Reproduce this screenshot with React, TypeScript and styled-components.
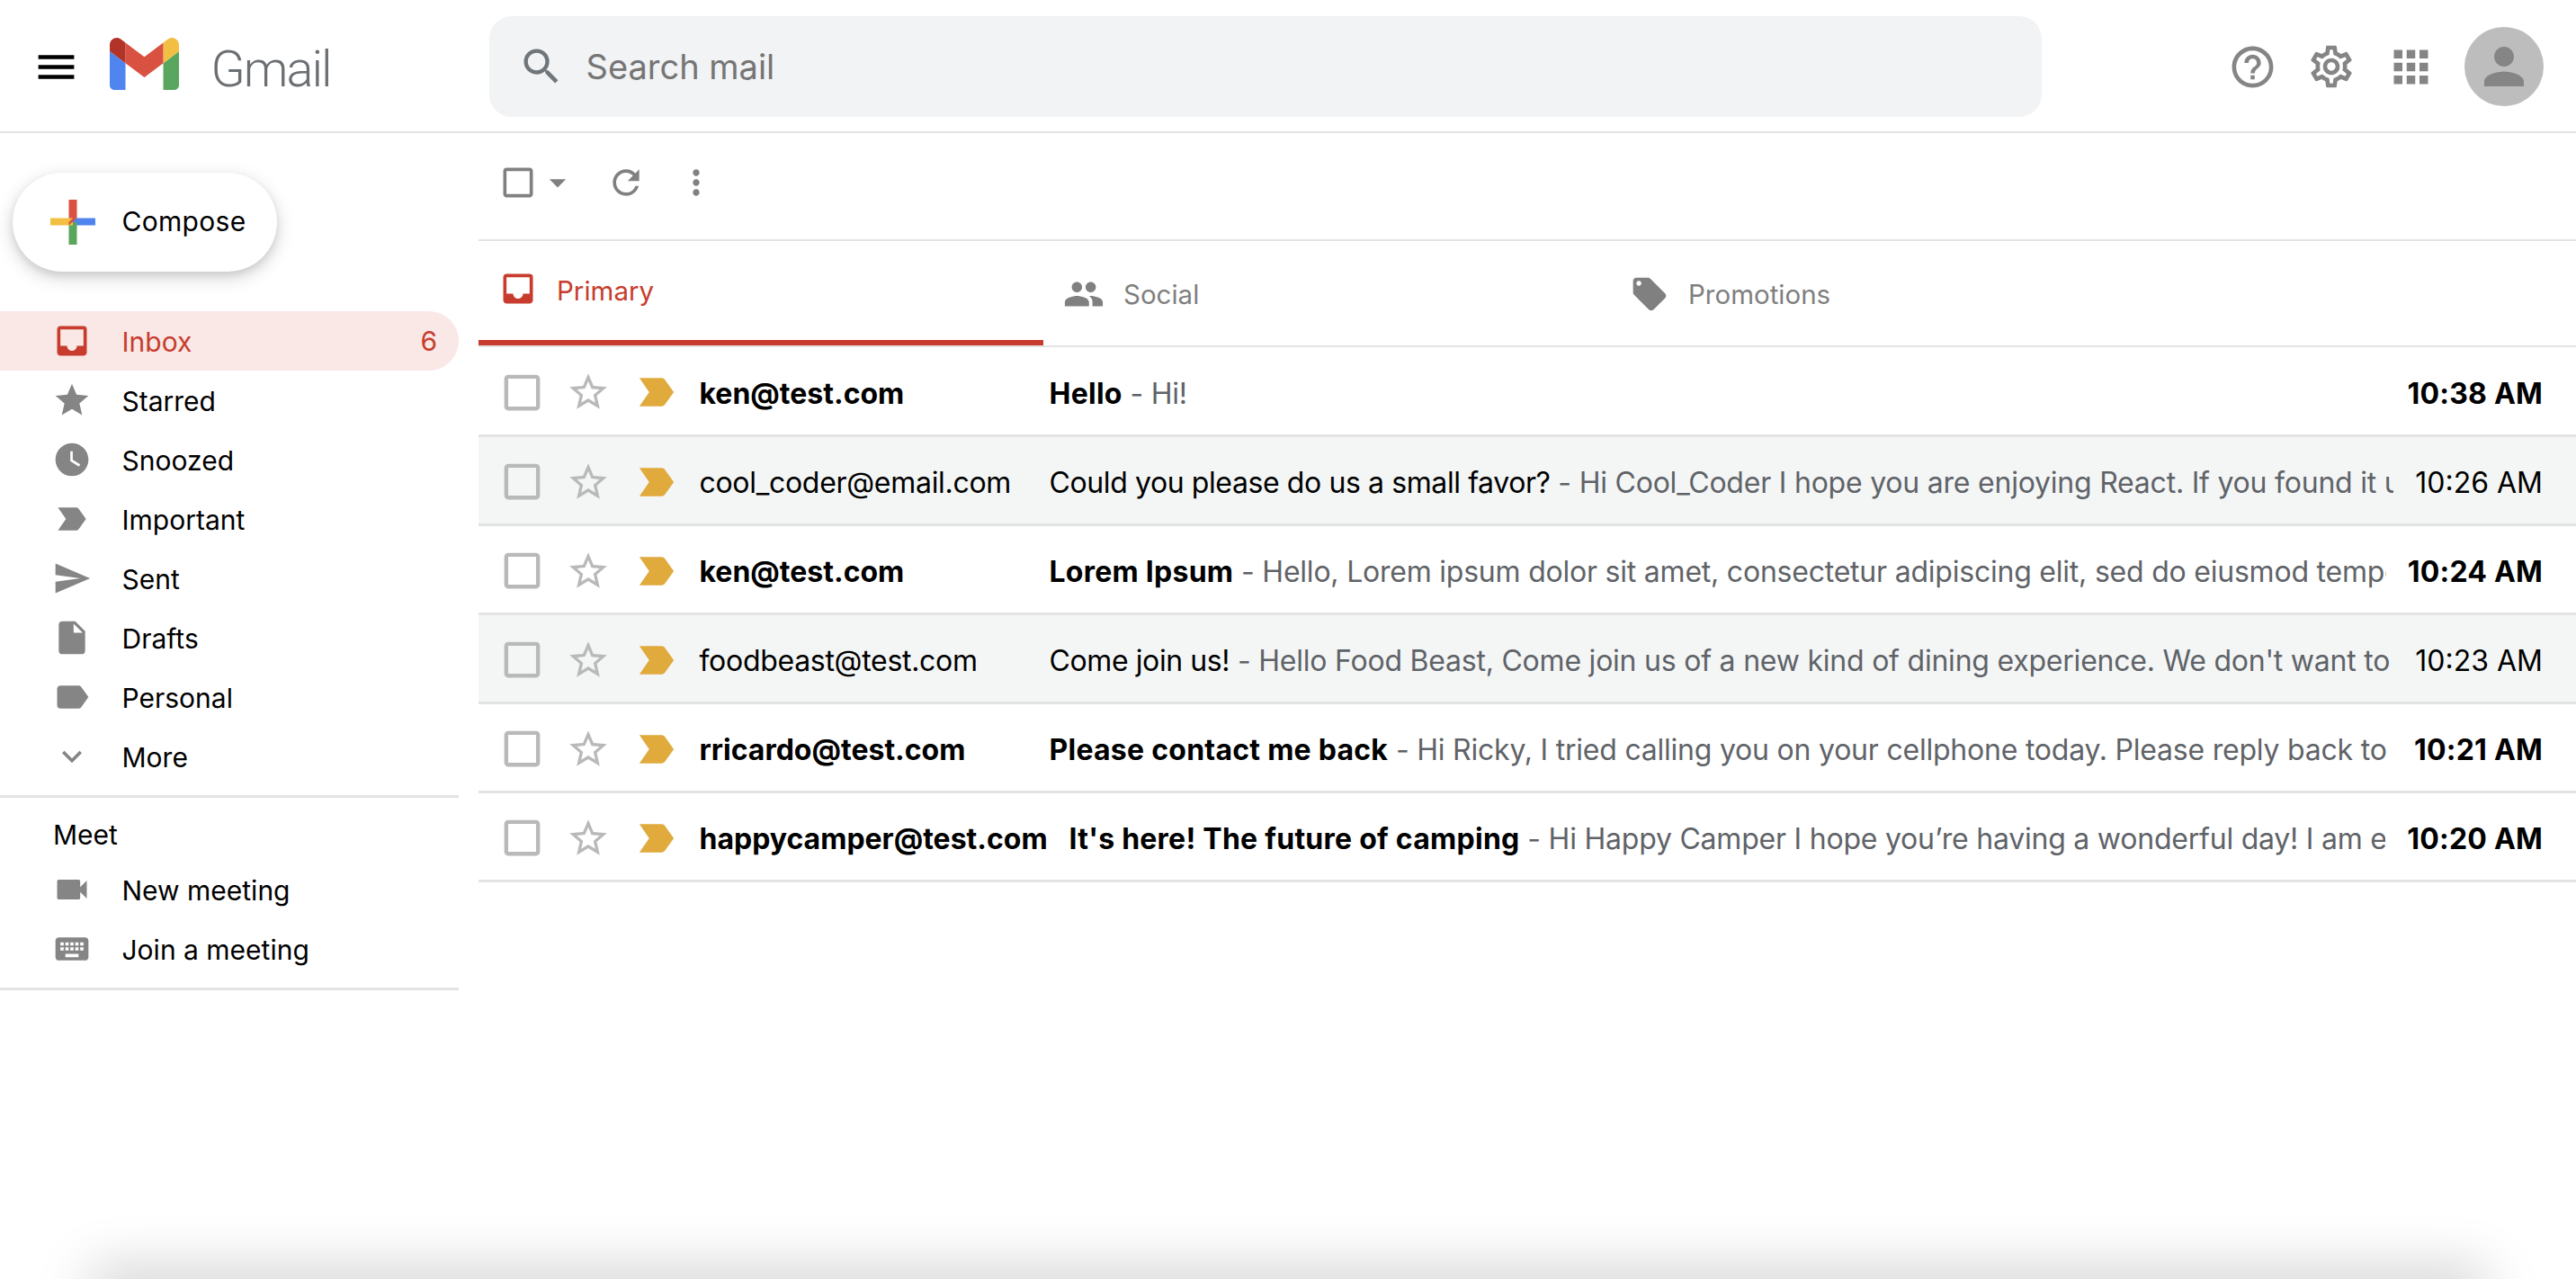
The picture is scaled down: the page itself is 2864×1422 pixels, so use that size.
import { createGlobalStyle, styled } from "styled-components";
import {
  MdApps,
  MdArrowDropDown,
  MdCheckBoxOutlineBlank,
  MdExpandMore,
  MdHelpOutline,
  MdInbox,
  MdInsertDriveFile,
  MdKeyboard,
  MdLabel,
  MdLabelImportant,
  MdLocalOffer,
  MdMenu,
  MdMoreVert,
  MdOutlineSettings,
  MdPeople,
  MdPerson,
  MdRefresh,
  MdSearch,
  MdSend,
  MdStar,
  MdStarBorder,
  MdVideocam,
  MdWatchLater,
} from "react-icons/md";

const navItems = [
  { label: "Inbox", icon: MdInbox, count: 6, active: true },
  { label: "Starred", icon: MdStar },
  { label: "Snoozed", icon: MdWatchLater },
  { label: "Important", icon: MdLabelImportant },
  { label: "Sent", icon: MdSend },
  { label: "Drafts", icon: MdInsertDriveFile },
  { label: "Personal", icon: MdLabel },
  { label: "More", icon: MdExpandMore },
];

const mails = [
  { from: "ken@test.com", subject: "Hello", snippet: "Hi!", time: "10:38 AM", unread: true },
  {
    from: "cool_coder@email.com",
    subject: "Could you please do us a small favor?",
    snippet: "Hi Cool_Coder I hope you are enjoying React. If you found it useful, please leave us a review on the course page.",
    time: "10:26 AM",
  },
  {
    from: "ken@test.com",
    subject: "Lorem Ipsum",
    snippet: "Hello, Lorem ipsum dolor sit amet, consectetur adipiscing elit, sed do eiusmod tempor incididunt ut labore et dolore magna aliqua.",
    time: "10:24 AM",
    unread: true,
  },
  {
    from: "foodbeast@test.com",
    subject: "Come join us!",
    snippet: "Hello Food Beast, Come join us of a new kind of dining experience. We don't want to spoil the surprise, so come and see.",
    time: "10:23 AM",
  },
  {
    from: "rricardo@test.com",
    subject: "Please contact me back",
    snippet: "Hi Ricky, I tried calling you on your cellphone today. Please reply back to this message as soon as you can.",
    time: "10:21 AM",
    unread: true,
  },
  {
    from: "happycamper@test.com",
    subject: "It's here! The future of camping",
    snippet: "Hi Happy Camper I hope you’re having a wonderful day! I am emailing you about our brand new camping gear.",
    time: "10:20 AM",
    unread: true,
  },
];

function GmailLogo() {
  return (
    <LogoSvg viewBox="52 42 88 66">
      <path fill="#5084ee" d="M58 108h14V74L52 59v43c0 3.32 2.69 6 6 6" />
      <path fill="#5aa65e" d="M120 108h14c3.32 0 6-2.69 6-6V59l-20 15" />
      <path fill="#f2bf42" d="M120 48v26l20-15v-8c0-7.42-8.47-11.65-14.4-7.2" />
      <path fill="#d95140" d="M72 74V48l24 18 24-18v26L96 92" />
      <path fill="#b23327" d="M52 51v8l20 15V48l-5.6-4.2c-5.94-4.45-14.4-.22-14.4 7.2" />
    </LogoSvg>
  );
}

function ComposePlus() {
  return (
    <PlusSvg viewBox="0 0 50 50">
      <rect x="20.5" y="0" width="9" height="25" fill="#d95140" />
      <rect x="25" y="20.5" width="25" height="8" fill="#5084ee" />
      <rect x="20.5" y="25" width="9" height="25" fill="#5aa65e" />
      <rect x="0" y="20.5" width="25" height="8" fill="#f2bf42" />
      <polygon points="20.5,28.5 29.5,20.5 25,20.5 20.5,25" fill="#d95140" />
    </PlusSvg>
  );
}

export default function App() {
  return (
    <Page>
      <GlobalStyle />

      <Header>
        <MenuBtn>
          <MdMenu />
        </MenuBtn>
        <GmailLogo />
        <Wordmark>Gmail</Wordmark>
        <SearchBox>
          <SearchIcon>
            <MdSearch />
          </SearchIcon>
          <SearchText>Search mail</SearchText>
        </SearchBox>
        <HeaderRight>
          <HeaderBtn $size={55}>
            <MdHelpOutline />
          </HeaderBtn>
          <HeaderBtn $size={56}>
            <MdOutlineSettings />
          </HeaderBtn>
          <HeaderBtn $size={57}>
            <MdApps />
          </HeaderBtn>
          <Avatar>
            <MdPerson />
          </Avatar>
        </HeaderRight>
      </Header>

      <Body>
        <Sidebar>
          <ComposeBtn>
            <ComposePlus />
            <ComposeLabel>Compose</ComposeLabel>
          </ComposeBtn>

          <NavList>
            {navItems.map((item) => (
              <NavRow key={item.label} $active={item.active}>
                <NavIcon>
                  <item.icon />
                </NavIcon>
                <NavLabel>{item.label}</NavLabel>
                {item.count && <NavCount>{item.count}</NavCount>}
              </NavRow>
            ))}
          </NavList>

          <MeetSection>
            <MeetTitle>Meet</MeetTitle>
            <NavRow>
              <NavIcon>
                <MdVideocam />
              </NavIcon>
              <NavLabel>New meeting</NavLabel>
            </NavRow>
            <NavRow>
              <NavIcon>
                <MdKeyboard />
              </NavIcon>
              <NavLabel>Join a meeting</NavLabel>
            </NavRow>
          </MeetSection>
        </Sidebar>

        <Main>
          <Toolbar>
            <ToolIcon>
              <MdCheckBoxOutlineBlank />
            </ToolIcon>
            <ToolIcon>
              <MdArrowDropDown />
            </ToolIcon>
            <ToolIcon $gap={32}>
              <MdRefresh />
            </ToolIcon>
            <ToolIcon $gap={34}>
              <MdMoreVert />
            </ToolIcon>
          </Toolbar>

          <Tabs>
            <Tab $active $width={628}>
              <TabIcon $size={44}>
                <MdInbox />
              </TabIcon>
              <TabLabel $active>Primary</TabLabel>
            </Tab>
            <Tab $width={630}>
              <TabIcon $size={46}>
                <MdPeople />
              </TabIcon>
              <TabLabel>Social</TabLabel>
            </Tab>
            <Tab $width={630}>
              <TabIcon $size={44}>
                <MdLocalOffer />
              </TabIcon>
              <TabLabel>Promotions</TabLabel>
            </Tab>
          </Tabs>

          <MailList>
            {mails.map((mail, i) => (
              <MailRow key={i} $alt={!mail.unread} $unread={mail.unread}>
                <RowCheck>
                  <MdCheckBoxOutlineBlank />
                </RowCheck>
                <RowStar>
                  <MdStarBorder />
                </RowStar>
                <RowImportant>
                  <MdLabelImportant />
                </RowImportant>
                <Sender $unread={mail.unread}>{mail.from}</Sender>
                <Message>
                  <Subject $unread={mail.unread}>{mail.subject}</Subject>
                  <Snippet> - {mail.snippet}</Snippet>
                </Message>
                <Time $unread={mail.unread}>{mail.time}</Time>
              </MailRow>
            ))}
          </MailList>
        </Main>
      </Body>

      <BottomShadow />
    </Page>
  );
}

const GlobalStyle = createGlobalStyle`
  html, body { margin: 0; background: #fff; overflow: hidden; }
  body { font-family: Inter, "Liberation Sans", sans-serif; color: #000; }
  * { box-sizing: border-box; }
`;

const Page = styled.div`
  position: relative;
  height: 1422px;
  overflow: hidden;
  background: #fff;
`;

const Header = styled.header`
  display: flex;
  align-items: center;
  height: 148px;
  padding: 2px 36px 0 35.5px;
  border-bottom: 2px solid #e3e3e3;
`;

const MenuBtn = styled.div`
  display: flex;
  font-size: 53px;
  color: #000;
  margin-right: 33px;
`;

const LogoSvg = styled.svg`
  width: 77px;
  height: 58px;
  flex-shrink: 0;
  margin-top: -6px;
`;

const Wordmark = styled.div`
  width: 309px;
  margin-left: 36px;
  margin-top: 5px;
  font-family: Roboto, sans-serif;
  font-size: 56px;
  font-weight: 300;
  letter-spacing: -2px;
  color: #6b6f73;
`;

const SearchBox = styled.div`
  display: flex;
  align-items: center;
  width: 1726px;
  height: 112px;
  padding-left: 32px;
  background: #f1f3f4;
  border-radius: 25px;
`;

const SearchIcon = styled.div`
  display: flex;
  font-size: 52px;
  color: #70757a;
  margin-right: 24px;
`;

const SearchText = styled.span`
  font-size: 38px;
  color: #757575;
`;

const HeaderRight = styled.div`
  display: flex;
  align-items: center;
  margin-left: auto;
`;

const HeaderBtn = styled.div<{ $size: number }>`
  display: flex;
  align-items: center;
  justify-content: center;
  width: 88px;
  font-size: ${(p) => p.$size}px;
  color: #858585;
`;

const Avatar = styled.div`
  display: flex;
  align-items: center;
  justify-content: center;
  width: 88px;
  height: 88px;
  margin-left: 16px;
  border-radius: 50%;
  background: #bdbdbd;
  font-size: 66px;
  color: #858585;
`;

const Body = styled.div`
  display: grid;
  grid-template-columns: 510px 1fr;
  column-gap: 22px;
`;

const Sidebar = styled.aside`
  padding-top: 44px;
`;

const ComposeBtn = styled.div`
  display: flex;
  align-items: center;
  width: 294px;
  height: 110px;
  margin-left: 14px;
  padding-left: 42px;
  border-radius: 55px;
  background: #fff;
  box-shadow: 0 4px 8px rgba(0, 0, 0, 0.08), 0 6px 20px rgba(0, 0, 0, 0.18);
`;

const ComposeLabel = styled.span`
  font-size: 30px;
  letter-spacing: 0.3px;
  margin-top: -2px;
`;

const PlusSvg = styled.svg`
  width: 50px;
  height: 50px;
  margin-right: 29.5px;
`;

const NavList = styled.nav`
  margin-top: 44px;
  padding-bottom: 10px;
  border-bottom: 3px solid #e3e3e3;
`;

const NavRow = styled.div<{ $active?: boolean }>`
  display: flex;
  align-items: center;
  height: 66px;
  padding: 0 24px 0 58px;
  border-radius: ${(p) => (p.$active ? "0 33px 33px 0" : "0")};
  background: ${(p) => (p.$active ? "#f9e8e6" : "transparent")};
  color: ${(p) => (p.$active ? "#c83c2e" : "#000")};

  svg {
    color: ${(p) => (p.$active ? "#c83c2e" : "#858585")};
  }
`;

const NavIcon = styled.div`
  display: flex;
  font-size: 44px;
  margin-right: 33.5px;
`;

const NavLabel = styled.span`
  font-size: 30px;
  font-weight: 400;
  padding-top: 2px;
`;

const NavCount = styled.span`
  margin-left: auto;
  font-size: 30px;
`;

const MeetSection = styled.section`
  padding-bottom: 10px;
  border-bottom: 3px solid #e3e3e3;
`;

const MeetTitle = styled.div`
  height: 69px;
  padding: 23px 0 0 59px;
  font-size: 30px;
  line-height: 36px;
`;

const Main = styled.main`
  min-width: 0;
`;

const Toolbar = styled.div`
  display: flex;
  align-items: center;
  height: 120px;
  padding: 0 0 8px 22px;
  border-bottom: 2px solid #e3e3e3;
`;

const ToolIcon = styled.div<{ $gap?: number }>`
  display: flex;
  font-size: 44px;
  color: #808080;
  margin-left: ${(p) => p.$gap ?? 0}px;
`;

const Tabs = styled.div`
  display: flex;
  height: 118px;
  border-bottom: 2px solid #e3e3e3;
`;

const Tab = styled.div<{ $active?: boolean; $width: number }>`
  display: flex;
  align-items: center;
  width: ${(p) => p.$width}px;
  height: 116px;
  padding: ${(p) => (p.$active ? "0 0 4px 22px" : "2px 0 0 22px")};
  color: ${(p) => (p.$active ? "#c83c2e" : "#7f7f7f")};
  border-bottom: ${(p) => (p.$active ? "6px solid #c83c2e" : "none")};

  svg {
    color: ${(p) => (p.$active ? "#c83c2e" : "#808080")};
  }
`;

const TabIcon = styled.div<{ $size: number }>`
  display: flex;
  font-size: ${(p) => p.$size}px;
  margin-right: 21px;
`;

const TabLabel = styled.span<{ $active?: boolean }>`
  font-size: 29.5px;
  padding-top: ${(p) => (p.$active ? 3 : 0)}px;
`;

const MailList = styled.div``;

const MailRow = styled.div<{ $alt?: boolean; $unread?: boolean }>`
  display: flex;
  align-items: center;
  height: 99px;
  padding: 3px 37px 0 21.5px;
  border-bottom: 3px solid #e3e3e3;
  background: ${(p) => (p.$alt ? "#f4f6f6" : "#fff")};
  font-size: 32px;
  font-weight: ${(p) => (p.$unread ? 700 : 400)};

  &:first-child {
    height: 100px;
  }
`;

const RowCheck = styled.div`
  display: flex;
  font-size: 53px;
  color: #b9b9b9;
`;

const RowStar = styled.div`
  display: flex;
  font-size: 50px;
  color: #b9b9b9;
  margin-left: 22px;
`;

const RowImportant = styled.div`
  display: flex;
  font-size: 54px;
  color: #e0aa3c;
  margin-left: 24px;
`;

const Sender = styled.div<{ $unread?: boolean }>`
  flex-shrink: 0;
  min-width: 389px;
  margin-left: 21px;
  padding: 2px 24px 0 0;
  white-space: nowrap;
  letter-spacing: ${(p) => (p.$unread ? 0 : -0.3)}px;
`;

const Message = styled.div`
  flex: 1;
  min-width: 0;
  margin-right: 24px;
  padding-top: 2px;
  overflow: hidden;
  white-space: nowrap;
`;

const Subject = styled.span<{ $unread?: boolean }>`
  letter-spacing: ${(p) => (p.$unread ? 0.25 : -0.4)}px;
`;

const Snippet = styled.span`
  font-weight: 400;
  letter-spacing: -0.22px;
  color: #5f6368;
`;

const Time = styled.div<{ $unread?: boolean }>`
  flex-shrink: 0;
  padding-top: 2px;
  white-space: nowrap;
  letter-spacing: ${(p) => (p.$unread ? 0.2 : 0)}px;
`;

const BottomShadow = styled.div`
  position: absolute;
  left: 110px;
  right: 110px;
  bottom: -20px;
  height: 20px;
  box-shadow: 0 0 60px 10px rgba(0, 0, 0, 0.22);
`;
